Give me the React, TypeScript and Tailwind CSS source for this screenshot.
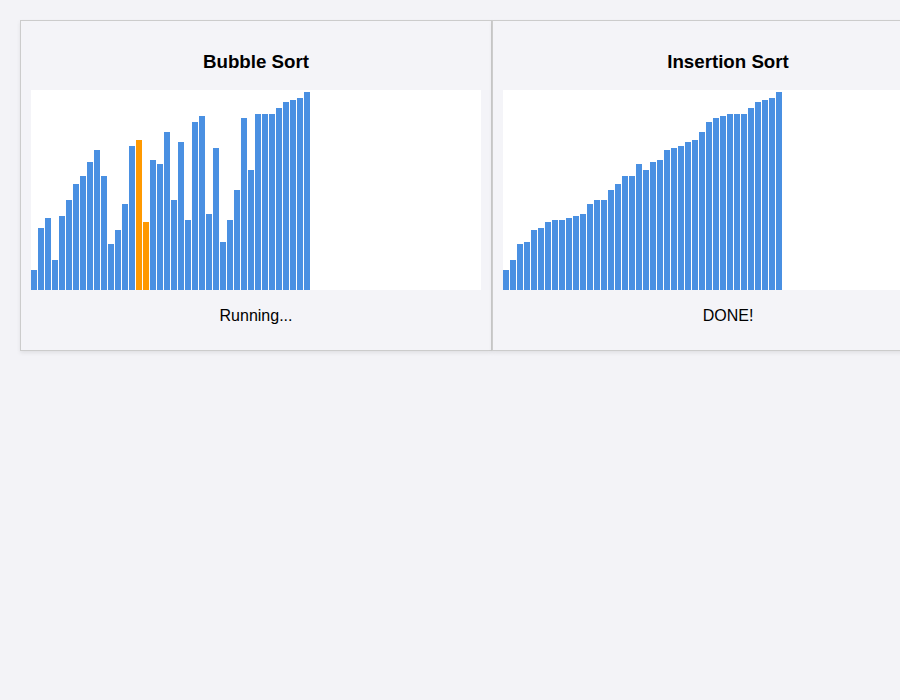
import React from "react";

const bubble = [20,62,72,30,74,90,106,114,128,140,114,46,60,86,144,150,68,130,126,158,90,148,70,168,174,76,142,48,70,100,172,120,176,176,176,182,188,190,192,198];
const insertion = [20,30,46,48,60,62,68,70,70,72,74,76,86,90,90,100,106,114,114,126,120,128,130,140,142,144,148,150,158,168,172,174,176,176,176,182,188,190,192,198];

function Panel({ title, data, status, hi }: { title: string; data: number[]; status: string; hi?: number[] }) {
  return (
    <div className="w-[472px] shrink-0 border border-[#cccccc] bg-[#f4f4f8] p-[10px] shadow-[0_2px_4px_rgba(0,0,0,0.08)] text-center">
      <h3 className="mt-[19.72px] mb-[17.72px] text-[18.72px] font-bold leading-[21.5px] text-black">{title}</h3>
      <div className="flex h-[200px] w-[450px] items-end bg-white">
        {data.map((h, i) => (
          <div
            key={i}
            className={`mr-[1px] w-[6px] shrink-0 ${hi && hi.includes(i) ? "bg-[#ff9900]" : "bg-[#4a90e2]"}`}
            style={{ height: h }}
          />
        ))}
      </div>
      <p className="mt-[17px] mb-[15px] text-base leading-[18.4px] text-black">{status}</p>
    </div>
  );
}

export default function App() {
  return (
    <div className="min-h-[700px] w-[900px] overflow-hidden bg-[#f3f3f7] p-5" style={{ fontFamily: '"Liberation Sans", Arial, sans-serif' }}>
      <div className="flex">
        <Panel title="Bubble Sort" data={bubble} status="Running..." hi={[15, 16]} />
        <Panel title="Insertion Sort" data={insertion} status="DONE!" />
      </div>
    </div>
  );
}
